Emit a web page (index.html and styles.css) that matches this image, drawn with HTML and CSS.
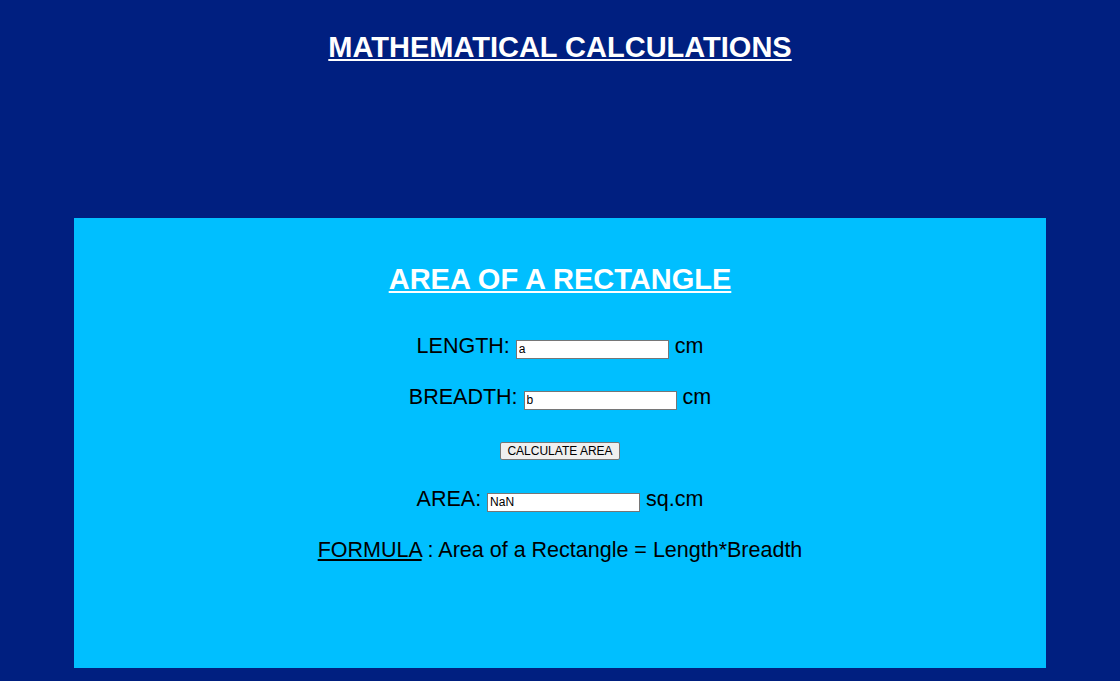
FILE: index.html
```html
<!DOCTYPE html>
<html>
<head>
<meta charset="utf-8">
<title>Mathematical Calculations</title>
<link rel="stylesheet" href="styles.css">
</head>
<body>
<h1 class="title">MATHEMATICAL CALCULATIONS</h1>
<div class="card">
  <h2 class="card-title">AREA OF A RECTANGLE</h2>
  <div class="row">LENGTH: <input class="field" type="text" value="a"> cm</div>
  <div class="row">BREADTH: <input class="field" type="text" value="b"> cm</div>
  <div class="row row-btn"><button class="btn" type="button">CALCULATE AREA</button></div>
  <div class="row">AREA: <input class="field" type="text" value="NaN"> sq.cm</div>
  <div class="row"><span class="u">FORMULA</span> : Area of a Rectangle = Length*Breadth</div>
</div>
</body>
</html>
```
FILE: styles.css
```css
html, body {
  margin: 0;
  padding: 0;
  background: #001f80;
  font-family: "Liberation Sans", Arial, sans-serif;
}
.title {
  margin: 0;
  padding-top: 31px;
  text-align: center;
  color: #ffffff;
  font-size: 29px;
  font-weight: bold;
  text-decoration: underline;
}
.card {
  width: 972px;
  height: 450px;
  margin: 154px auto 0;
  background: #00bfff;
  box-sizing: border-box;
  padding-top: 45px;
  display: flex;
  flex-direction: column;
  align-items: center;
}
.card-title {
  margin: 0 0 38px;
  color: #ffffff;
  font-size: 29px;
  font-weight: bold;
  text-decoration: underline;
}
.row {
  font-size: 21.5px;
  color: #000;
  height: 51px;
}
.field {
  width: 153px;
  height: 19px;
  box-sizing: border-box;
  font-family: "Liberation Sans", Arial, sans-serif;
  font-size: 12px;
  padding: 1px 2px;
  border: 1px solid #767676;
  vertical-align: baseline;
}
.btn {
  font-family: "Liberation Sans", Arial, sans-serif;
  font-size: 12px;
  padding: 1px 6px;
  background: #efefef;
  border: 1px solid #767676;
  border-radius: 2px;
  color: #000;
}
.u { text-decoration: underline; }
```
